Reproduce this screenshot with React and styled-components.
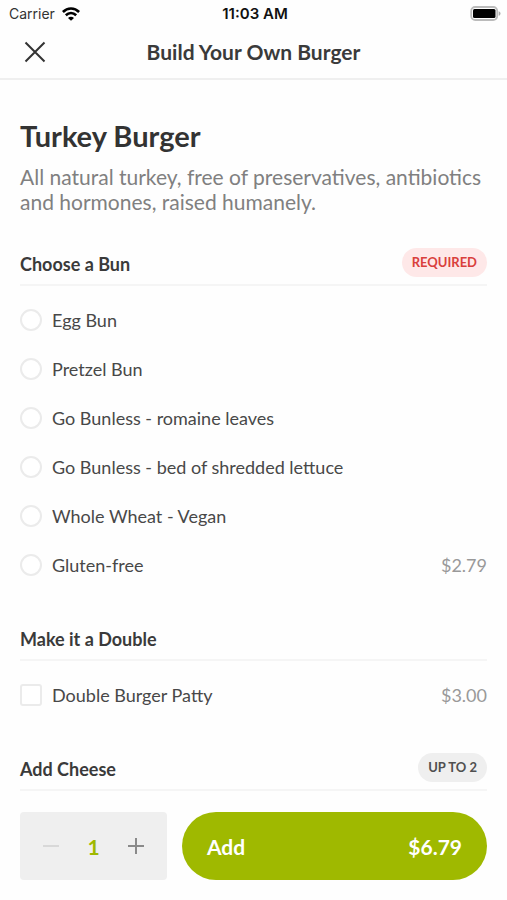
import React, { useState } from 'react';
import styled, { createGlobalStyle } from 'styled-components';

const GlobalStyle = createGlobalStyle`
  * {
    box-sizing: border-box;
  }
  body {
    margin: 0;
    background: #fefefe;
    color: #3a3a3a;
    font-family: Lato, "Open Sans", sans-serif;
  }
  button {
    border: 0;
    padding: 0;
    background: none;
    color: inherit;
    font: inherit;
    cursor: pointer;
  }
`;

const Page = styled.div`
  display: flex;
  flex-direction: column;
  min-height: 100vh;
`;

const StatusBar = styled.div`
  display: grid;
  grid-template-columns: 1fr auto 1fr;
  align-items: center;
  height: 27px;
  padding: 0 6px 0 9px;
  color: #111;
  font-family: Inter, "Liberation Sans", sans-serif;
  font-size: 14px;
`;

const Carrier = styled.div`
  display: flex;
  align-items: center;
  gap: 7px;
  color: #333;
`;

const Time = styled.div`
  font-size: 15px;
  font-weight: 600;
`;

const BatteryIcon = styled.svg`
  justify-self: end;
`;

const NavBar = styled.header`
  display: grid;
  grid-template-columns: 30px 1fr 30px;
  align-items: center;
  height: 53px;
  padding: 0 20px 2px;
  border-bottom: 2px solid #efefef;
`;

const CloseButton = styled.button`
  display: flex;
  justify-content: center;
`;

const NavTitle = styled.h1`
  margin: 0;
  font-size: 21px;
  font-weight: 700;
  line-height: 26px;
  text-align: center;
`;

const Content = styled.main`
  flex: 1;
  padding: 37px 20px 0;
`;

const ItemName = styled.h2`
  margin: 0;
  color: #333;
  font-size: 29px;
  font-weight: 700;
  line-height: 38px;
`;

const Description = styled.p`
  margin: 9px 0 33px;
  color: #808080;
  font-size: 21px;
  line-height: 25px;
`;

const Section = styled.section`
  margin-bottom: 33px;
  &:last-child {
    margin-bottom: 0;
  }
`;

const SectionHeader = styled.div`
  display: flex;
  justify-content: space-between;
  align-items: flex-end;
  height: 39px;
  padding-bottom: 7px;
  border-bottom: 2px solid #f5f5f5;
`;

const SectionTitle = styled.h3`
  margin: 0;
  font-size: 18px;
  font-weight: 700;
  line-height: 26px;
`;

const Badge = styled.span`
  padding: 0 10px;
  border-radius: 15px;
  background: ${(props) => (props.$required ? '#fee8e8' : '#efefef')};
  color: ${(props) => (props.$required ? '#d9403c' : '#505050')};
  font-size: 13px;
  font-weight: 700;
  line-height: 29px;
`;

const Options = styled.div`
  padding-top: 9px;
`;

const OptionRow = styled.label`
  display: flex;
  align-items: center;
  gap: 10px;
  height: 49px;
  color: #484848;
  font-size: 18px;
  line-height: 24px;
  cursor: pointer;
`;

const Choice = styled.input`
  appearance: none;
  flex: none;
  width: 22px;
  height: 22px;
  margin: 0;
  border: 2px solid #ebebeb;
  border-radius: ${(props) => (props.type === 'radio' ? '50%' : '3px')};
  background: #fff;
  &:checked {
    border-color: #9fb900;
    background: #9fb900;
    box-shadow: inset 0 0 0 3px #fff;
  }
`;

const Price = styled.span`
  margin-left: auto;
  color: #999;
`;

const Footer = styled.footer`
  position: sticky;
  bottom: 0;
  display: flex;
  gap: 15px;
  padding: 20px;
  background: #fefefe;
`;

const Stepper = styled.div`
  display: flex;
  justify-content: space-between;
  align-items: center;
  width: 147px;
  height: 68px;
  padding: 0 20px;
  border-radius: 4px;
  background: #efefef;
`;

const StepButton = styled.button`
  display: flex;
  justify-content: center;
  width: 22px;
  color: #8a8a8a;
  &:disabled {
    color: #d8d8d8;
    cursor: default;
  }
`;

const Quantity = styled.output`
  color: #9fb900;
  font-size: 21px;
  font-weight: 700;
`;

const AddButton = styled.button`
  flex: 1;
  display: flex;
  justify-content: space-between;
  align-items: center;
  height: 68px;
  && {
    padding: 0 25px;
    border-radius: 34px;
    background: #9fb900;
    color: #fff;
    font-size: 21px;
    font-weight: 700;
  }
`;

const sections = [
  {
    title: 'Choose a Bun',
    badge: 'REQUIRED',
    required: true,
    type: 'radio',
    options: [
      { name: 'Egg Bun' },
      { name: 'Pretzel Bun' },
      { name: 'Go Bunless - romaine leaves' },
      { name: 'Go Bunless - bed of shredded lettuce' },
      { name: 'Whole Wheat - Vegan' },
      { name: 'Gluten-free', price: 2.79 },
    ],
  },
  {
    title: 'Make it a Double',
    type: 'checkbox',
    options: [{ name: 'Double Burger Patty', price: 3 }],
  },
  {
    title: 'Add Cheese',
    badge: 'UP TO 2',
    type: 'checkbox',
    options: [],
  },
];

function WifiIcon() {
  return (
    <svg width="18" height="14" viewBox="0 0 18 14" fill="none" stroke="#000" strokeWidth="2.6" aria-hidden="true">
      <path d="M.9 5C5.5.4 12.5.4 17.1 5" />
      <path d="M3.8 8.2c3.1-2.9 7.3-2.9 10.4 0" />
      <path d="M9 13.8 6 10.9c1.7-1.5 4.3-1.5 6 0z" fill="#000" stroke="none" />
    </svg>
  );
}

function Battery() {
  return (
    <BatteryIcon width="31" height="15" viewBox="0 0 31 15" aria-hidden="true">
      <rect x="1.2" y="1" width="26" height="13" rx="4" fill="#fff" stroke="#bbb" strokeWidth="1.8" />
      <rect x="3" y="3" width="22.5" height="9" rx="1.5" fill="#000" />
      <path d="M28.7 5.2c2.4.9 2.4 3.7 0 4.6z" fill="#aaa" />
    </BatteryIcon>
  );
}

function App() {
  const [quantity, setQuantity] = useState(1);

  return (
    <Page>
      <GlobalStyle />
      <StatusBar>
        <Carrier>
          Carrier
          <WifiIcon />
        </Carrier>
        <Time>11:03 AM</Time>
        <Battery />
      </StatusBar>
      <NavBar>
        <CloseButton aria-label="Close">
          <svg width="22" height="22" viewBox="0 0 22 22" fill="none" stroke="#333" strokeWidth="2">
            <path d="M1.5 1.5l19 19M20.5 1.5l-19 19" />
          </svg>
        </CloseButton>
        <NavTitle>Build Your Own Burger</NavTitle>
      </NavBar>
      <Content>
        <ItemName>Turkey Burger</ItemName>
        <Description>
          All natural turkey, free of preservatives, antibiotics and hormones, raised humanely.
        </Description>
        {sections.map((section) => (
          <Section key={section.title}>
            <SectionHeader>
              <SectionTitle>{section.title}</SectionTitle>
              {section.badge && <Badge $required={section.required}>{section.badge}</Badge>}
            </SectionHeader>
            {section.options.length > 0 && (
              <Options>
                {section.options.map((option) => (
                  <OptionRow key={option.name}>
                    <Choice type={section.type} name={section.title} value={option.name} />
                    <span>{option.name}</span>
                    {option.price && <Price>${option.price.toFixed(2)}</Price>}
                  </OptionRow>
                ))}
              </Options>
            )}
          </Section>
        ))}
      </Content>
      <Footer>
        <Stepper>
          <StepButton
            aria-label="Remove one"
            disabled={quantity === 1}
            onClick={() => setQuantity(quantity - 1)}
          >
            <svg width="16" height="16" viewBox="0 0 16 16" stroke="currentColor" strokeWidth="2">
              <path d="M0 8h16" />
            </svg>
          </StepButton>
          <Quantity>{quantity}</Quantity>
          <StepButton aria-label="Add one" onClick={() => setQuantity(quantity + 1)}>
            <svg width="16" height="16" viewBox="0 0 16 16" stroke="currentColor" strokeWidth="2">
              <path d="M0 8h16M8 0v16" />
            </svg>
          </StepButton>
        </Stepper>
        <AddButton>
          <span>Add</span>
          <span>${(quantity * 6.79).toFixed(2)}</span>
        </AddButton>
      </Footer>
    </Page>
  );
}

export default App;
